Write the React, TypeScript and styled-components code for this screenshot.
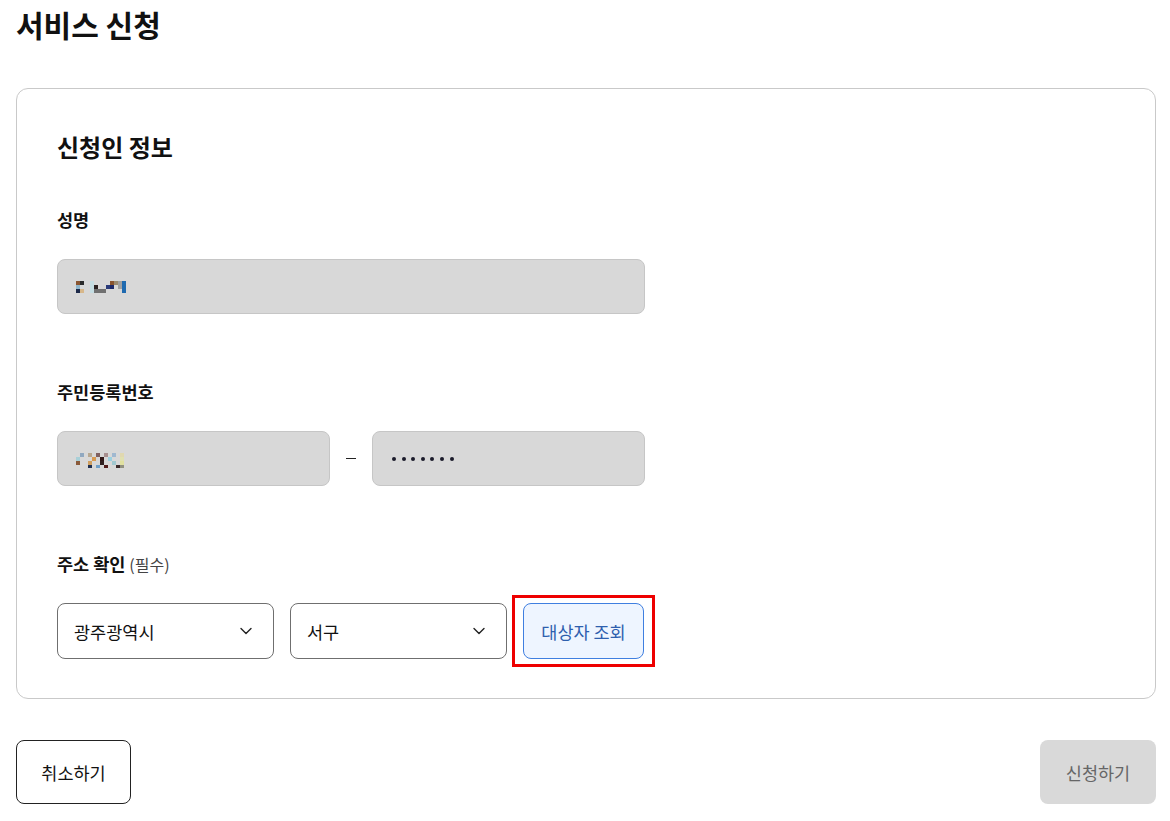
import styled, { createGlobalStyle } from 'styled-components';

const GlobalStyle = createGlobalStyle`
  body {
    margin: 0;
    background: #ffffff;
    font-family: "Noto Sans CJK KR", "Noto Sans", sans-serif;
    color: #111111;
  }
`;

const Page = styled.div`
  padding: 0 14px 0 16px;
`;

const PageTitle = styled.h1`
  margin: 4px 0 44px;
  font-size: 30px;
  line-height: 40px;
  font-weight: 700;
`;

const Card = styled.section`
  border: 1px solid #c9c9c9;
  border-radius: 12px;
  padding: 40px 40px 39px;
`;

const SectionTitle = styled.h2`
  margin: 0 0 43px;
  font-size: 24px;
  line-height: 36px;
  font-weight: 700;
`;

const Field = styled.div<{ $last?: boolean }>`
  display: flex;
  flex-direction: column;
  gap: 27px;
  margin-bottom: ${(p) => (p.$last ? 0 : 66)}px;
`;

const Label = styled.div`
  font-size: 17.5px;
  line-height: 24px;
  font-weight: 700;
`;

const Hint = styled.span`
  font-size: 16px;
  font-weight: 400;
  color: #444444;
`;

const Row = styled.div`
  display: flex;
  align-items: center;
`;

const Box = styled.div<{ $width: number }>`
  width: ${(p) => p.$width}px;
  height: 55px;
  box-sizing: border-box;
  background: #d8d8d8;
  border: 1px solid #c6c6c6;
  border-radius: 8px;
  display: flex;
  align-items: center;
  padding-left: 18px;
`;

const Dash = styled.span`
  width: 42px;
  display: flex;
  justify-content: center;

  &::before {
    content: '';
    width: 10px;
    height: 1px;
    background: #222222;
  }
`;

const Dots = styled.div`
  display: flex;
  gap: 5.6px;
  padding-left: 1px;
`;

const Dot = styled.span`
  width: 4px;
  height: 4px;
  border-radius: 50%;
  background: #1a1a2a;
`;

const SelectBox = styled.div`
  width: 217px;
  height: 56px;
  box-sizing: border-box;
  border: 1px solid #6f6f6f;
  border-radius: 8px;
  display: flex;
  align-items: center;
  justify-content: space-between;
  padding: 0 21px 0 16px;
  font-size: 17.5px;
  color: #111111;
  background: #ffffff;
`;

const Controls = styled.div`
  display: flex;
  gap: 16px;
`;

const LookupButton = styled.button`
  position: relative;
  width: 121px;
  height: 56px;
  padding: 0;
  border: 1px solid #3f7fe0;
  border-radius: 8px;
  background: #eef5ff;
  color: #2e5fae;
  font-family: inherit;
  font-size: 17.5px;

  &::after {
    content: '';
    position: absolute;
    inset: -9px -12px;
    border: 3px solid #ee0000;
    pointer-events: none;
  }
`;

const Footer = styled.div`
  display: flex;
  justify-content: space-between;
  margin-top: 41px;
`;

const FooterButton = styled.button<{ $disabled?: boolean }>`
  height: 64px;
  padding: 0;
  border-radius: 8px;
  font-family: inherit;
  font-size: 17.5px;
  border: ${(p) => (p.$disabled ? 'none' : '1px solid #222222')};
  background: ${(p) => (p.$disabled ? '#d9d9d9' : '#ffffff')};
  color: ${(p) => (p.$disabled ? '#666666' : '#111111')};
  width: ${(p) => (p.$disabled ? 116 : 115)}px;
`;

const Chevron = () => (
  <svg width="12" height="8" viewBox="0 0 12 8" fill="none">
    <path d="M1 1.5l5 5 5-5" stroke="#222" strokeWidth="1.4" strokeLinecap="round" strokeLinejoin="round" />
  </svg>
);

type Cell = [number, number, string];

const Mosaic = ({ cells, width }: { cells: Cell[]; width: number }) => (
  <svg width={width} height="18" viewBox={`0 0 ${width} 18`}>
    {cells.map(([x, y, c], i) => (
      <rect key={i} x={x} y={y} width="4" height="4" fill={c} />
    ))}
  </svg>
);

const nameCells: Cell[] = [
  [0, 3, '#8a5530'], [4, 3, '#2a2a2a'], [0, 7, '#8fb6cc'], [0, 11, '#1d2a4a'], [4, 11, '#d7b78a'],
  [14, 3, '#c5dde2'], [14, 7, '#c5dde2'], [14, 11, '#c5dde2'], [18, 7, '#2a2222'], [18, 11, '#707070'],
  [22, 11, '#707070'], [26, 11, '#707070'], [30, 7, '#2b3b7a'], [34, 3, '#8a5530'], [34, 7, '#1d2a6a'],
  [38, 3, '#9a8a70'], [42, 3, '#a0a0a0'], [42, 7, '#a0a0a0'], [46, 3, '#1f6ab0'], [46, 7, '#1f6ab0'], [46, 11, '#1f6ab0'],
];

const idCells: Cell[] = [
  [4, 3, '#90a8c0'], [0, 7, '#a8d0d8'], [0, 11, '#8a5a3a'], [12, 3, '#b8a890'], [16, 7, '#d89a50'],
  [12, 11, '#d0a060'], [12, 15, '#203050'], [20, 3, '#806060'], [24, 7, '#301818'], [24, 11, '#302020'],
  [20, 15, '#70a0c8'], [28, 3, '#a89090'], [32, 7, '#9ad0e0'], [28, 15, '#501a1a'], [36, 3, '#a0b8d0'],
  [36, 11, '#a0c8d0'], [40, 15, '#3a2a2a'], [44, 3, '#e0d8b0'], [44, 7, '#e0e0b0'], [44, 11, '#e0e0a0'], [44, 15, '#909080'],
];

const App = () => (
  <Page>
    <GlobalStyle />
    <PageTitle>서비스 신청</PageTitle>
    <Card>
      <SectionTitle>신청인 정보</SectionTitle>

      <Field>
        <Label>성명</Label>
        <Box $width={588}>
          <Mosaic cells={nameCells} width={50} />
        </Box>
      </Field>

      <Field>
        <Label>주민등록번호</Label>
        <Row>
          <Box $width={273}>
            <Mosaic cells={idCells} width={48} />
          </Box>
          <Dash />
          <Box $width={273}>
            <Dots>
              {Array.from({ length: 7 }, (_, i) => (
                <Dot key={i} />
              ))}
            </Dots>
          </Box>
        </Row>
      </Field>

      <Field $last>
        <Label>
          주소 확인 <Hint>(필수)</Hint>
        </Label>
        <Controls>
          <SelectBox>
            광주광역시
            <Chevron />
          </SelectBox>
          <SelectBox>
            서구
            <Chevron />
          </SelectBox>
          <LookupButton>대상자 조회</LookupButton>
        </Controls>
      </Field>
    </Card>
    <Footer>
      <FooterButton>취소하기</FooterButton>
      <FooterButton $disabled>신청하기</FooterButton>
    </Footer>
  </Page>
);

export default App;
